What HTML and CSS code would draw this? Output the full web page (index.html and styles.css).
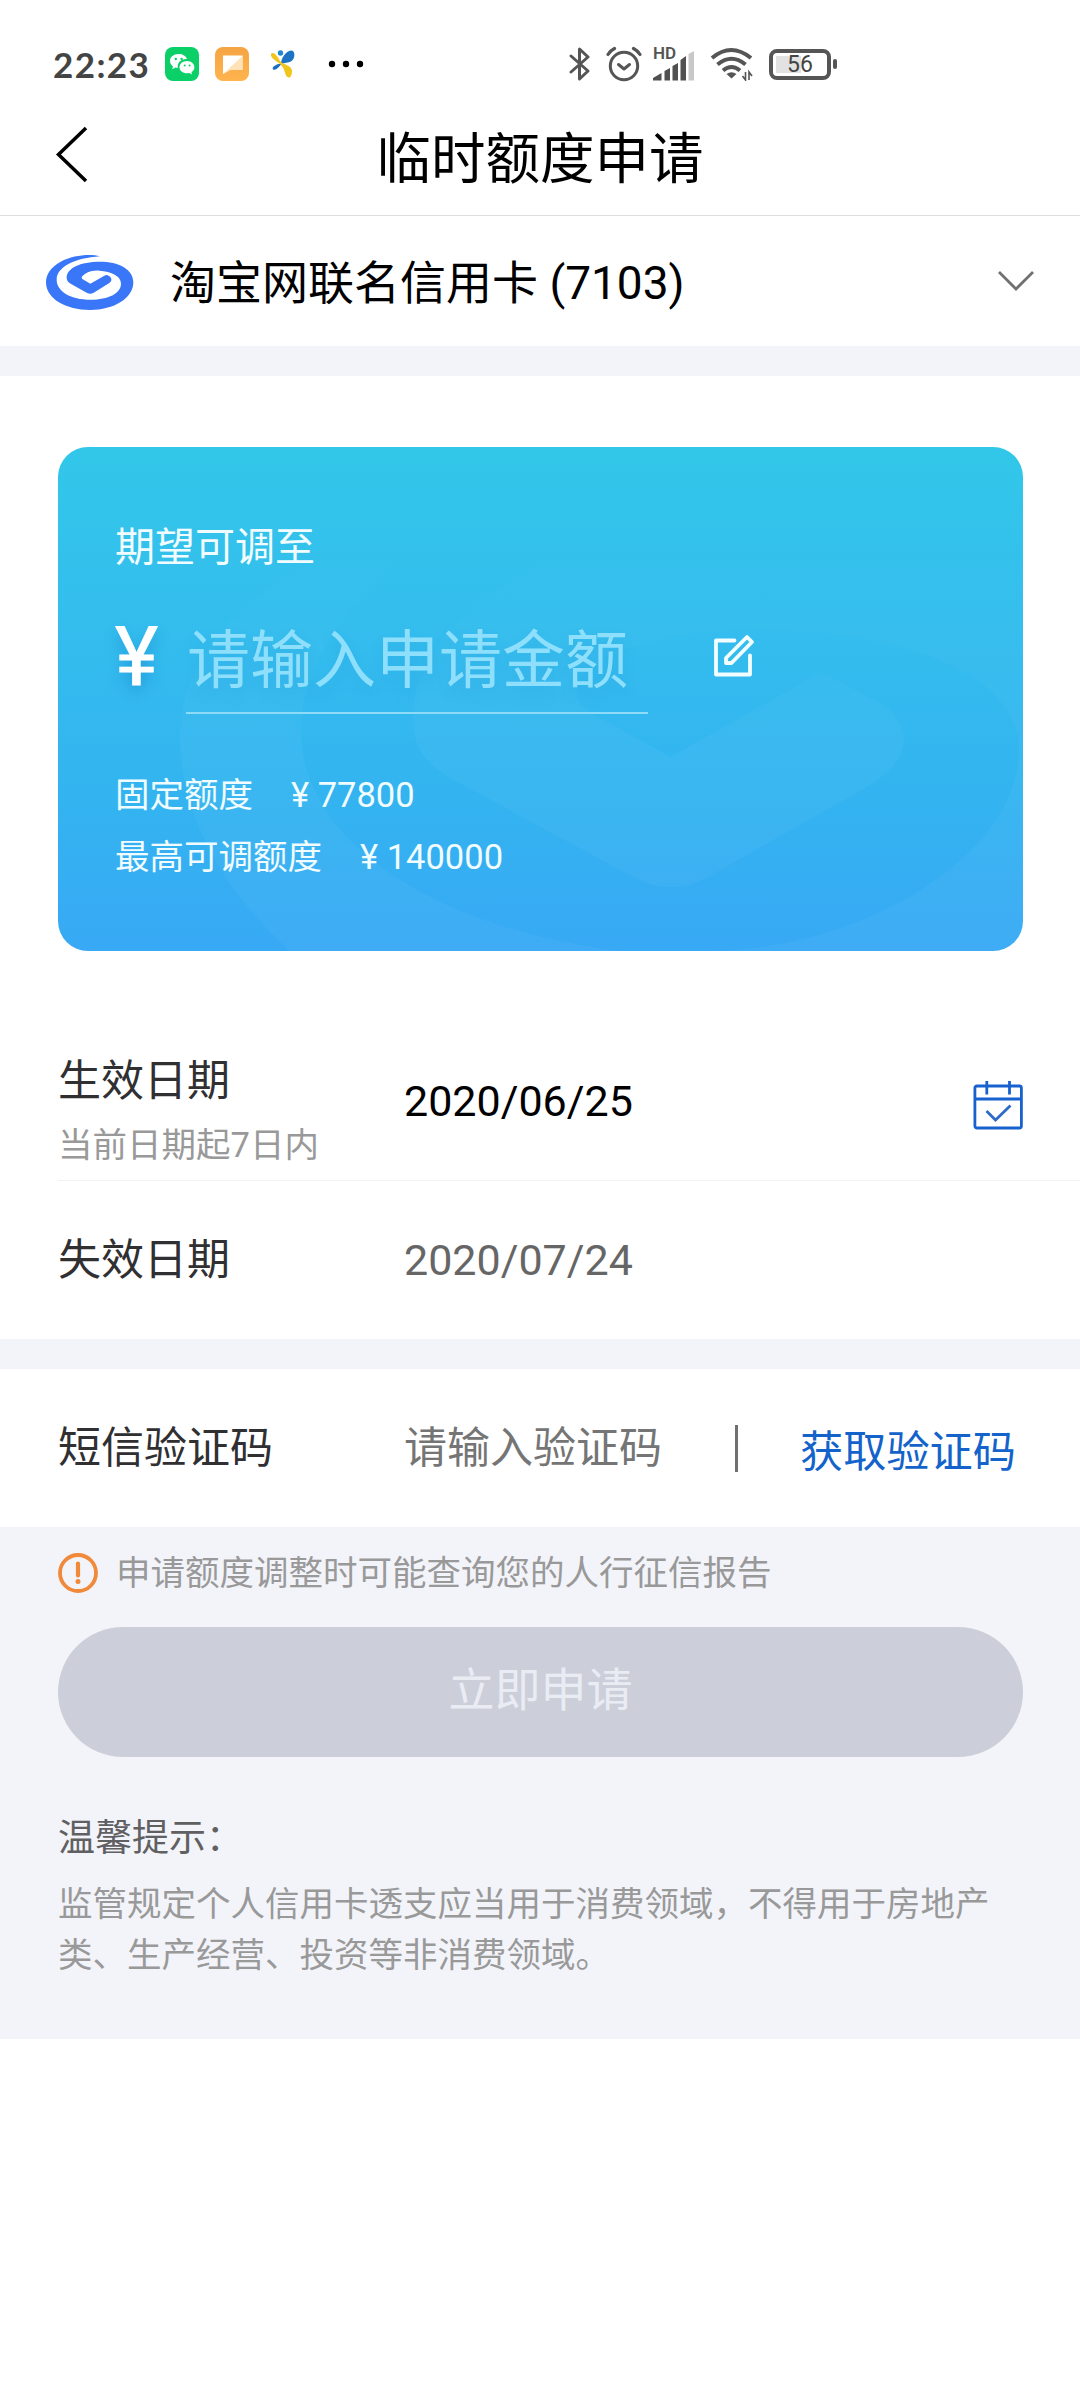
FILE: index.html
```html
<!DOCTYPE html>
<html lang="zh-CN">
<head>
<meta charset="utf-8">
<title>临时额度申请</title>
<link rel="stylesheet" href="styles.css">
</head>
<body>
<div class="status">
  <span class="clock">22:23</span>
  <svg class="app app-chat" width="34" height="34" viewBox="0 0 34 34"><rect width="34" height="34" rx="8" fill="#0bd068"/><path d="M13.5 7C8.500 7 5 10.200 5 14c0 2.200 1 4 3 5.400l-.8 2.800 3.200-1.700 2.400.5c-.8-6 4-9.600 9.200-9C21 9 17.700 7 13.500 7z" fill="#fff"/><path d="M22 14c-4.200 0-7.500 2.800-7.500 6.200S17.800 26.300 22 26.300l2.300-.3 2.800 1.500-.7-2.400c1.900-1.200 3-2.900 3-4.900C29.400 16.800 26.200 14 22 14z" fill="#fff"/><g fill="#0bd068"><circle cx="10.800" cy="12" r="1.200"/><circle cx="16.600" cy="12" r="1.200"/><circle cx="19.700" cy="18.500" r="1"/><circle cx="24.600" cy="18.500" r="1"/></g></svg>
  <svg class="app app-note" width="34" height="34" viewBox="0 0 34 34"><defs><linearGradient id="note" x1="0" y1="0" x2="0" y2="1"><stop offset="0" stop-color="#f5a443"/><stop offset="1" stop-color="#ffb44e"/></linearGradient></defs><rect width="34" height="34" rx="8" fill="url(#note)"/><path d="M8 8.500h19.500v14.500H15L8 27z" fill="#fff"/><path d="M27.500 9v14H15L8 27z" fill="#ffe2b8"/></svg>
  <svg class="app-fly" width="24" height="28" viewBox="0 0 24 28"><circle cx="9.500" cy="3" r="2.700" fill="#2088d0"/><path d="M10 14C10 8 15 1 20 .5c5 0 4 9 0 11-3 1.500-6 1-10 2.500z" fill="#1c73c4"/><path d="M11 13.500C8 16 6 21 2 19.500c-2-3 5-6 9-6z" fill="#1b6fc0"/><path d="M0 4c2-3 6 1 9 7 3 4 12 4 12 10 0 4-1.500 7-3.500 6.500C13 26 15 19 9 14 6 11.500-1 8 0 4z" fill="#f0c51c"/></svg>
  <svg class="dots" width="36" height="8" viewBox="0 0 36 8"><circle cx="4" cy="4" r="3.200"/><circle cx="18" cy="4" r="3.200"/><circle cx="32" cy="4" r="3.200"/></svg>
  <svg class="sys bt" width="22" height="36" viewBox="0 0 22 36"><path d="M2 10l17 15-8.500 8V3l8.500 8L2 26" fill="none" stroke="#555" stroke-width="3" stroke-linejoin="round" stroke-linecap="round"/></svg>
  <svg class="sys alarm" width="36" height="36" viewBox="0 0 36 36"><g fill="none" stroke="#555" stroke-width="3" stroke-linecap="round" stroke-linejoin="round"><circle cx="18" cy="20" r="13.700"/><path d="M12.500 18.500l5.500 4.500 5.500-4.500"/><path d="M2 8.500q2.500-4 6.500-6M34 8.500q-2.500-4-6.500-6" stroke-width="3.200"/></g></svg>
  <div class="signal"><span class="hd">HD</span>
    <svg width="42" height="30" viewBox="0 0 42 30"><path d="M0 29.500v-2.500l8.500-5v7.500zM11.500 20l5.500-3v12.500h-5.500zM19.500 15l5.500-3v17.500h-5.500zM27.500 9l5.500-4v24.500h-5.500z" fill="#505050"/><path d="M35.500 3l5.500-3v29.500h-5.500z" fill="#c8c8c8"/></svg>
  </div>
  <svg class="sys wifi" width="44" height="34" viewBox="0 0 44 34"><g fill="none" stroke="#555" stroke-width="4"><path d="M2 11q19-16 39 0"/><path d="M7.500 17.500q14-11.500 28 0"/><path d="M13 23.500q8.500-7 17 0"/></g><path d="M16.500 27q5-3.500 10 0l-5 4.500z" fill="#555"/><path d="M35.500 25v8l-3-4M39 33v-8l3 4" fill="none" stroke="#555" stroke-width="1.600"/></svg>
  <div class="battery"><span>56</span></div>
  <i class="battery-tip"></i>
</div>

<header class="header">
  <svg class="back" width="34" height="62" viewBox="0 0 34 62"><path d="M31 4L3.500 30.500 31 57" fill="none" stroke="#000" stroke-width="3.500"/></svg>
  <h1>临时额度申请</h1>
</header>

<section class="account">
  <svg class="logo" width="100" height="75" viewBox="0 0 300 225"><path fill="#3a76f8" d="M180 34C150 26 100 30 62 50C30 68 18 90 18 112C18 162 78 195 150 195C222 195 280 160 280 112C280 72 235 50 180 50C120 50 80 70 80 98C80 106 84 111 92 116L140 143C147 147 154 147 161 143L208 114C217 107 216 98 206 92Q200 88 193 92L151 116L127 102C122 96 128 91 136 86C147 79 162 76 178 77C215 79 243 93 243 116C243 145 205 164 152 164C92 164 50 139 50 104C50 66 105 39 180 34Z"/></svg>
  <span class="account-name">淘宝网联名信用卡 (7103)</span>
  <svg class="chevron" width="38" height="24" viewBox="0 0 38 24"><path d="M2 3l17 17L36 3" fill="none" stroke="#707070" stroke-width="2.800"/></svg>
</section>

<section class="quota-wrap">
  <div class="quota">
    <svg class="mark" width="965" height="504" viewBox="0 0 965 504"><defs><linearGradient id="fade" gradientUnits="userSpaceOnUse" x1="0" y1="60" x2="0" y2="504"><stop offset=".1" stop-color="#fff" stop-opacity="0"/><stop offset=".55" stop-color="#fff" stop-opacity=".035"/></linearGradient></defs><path fill="url(#fade)" fill-rule="evenodd" d="M232 504C150 430 122 350 122 290C122 190 220 110 380 60H965V504ZM560 504C370 480 243 390 243 285C243 215 290 150 400 60L620 60C450 110 355 190 355 270C355 300 365 316 400 335L575 430Q613 450 650 430L800 345Q846 320 846 293Q846 270 820 255L763 225L613 310L531 265C490 235 550 183 700 183C840 183 961 225 961 303C961 410 800 504 650 504Z"/></svg>
    <div class="quota-label">期望可调至</div>
    <div class="amount">
      <span class="yen">¥</span>
      <div class="amount-field">请输入申请金额</div>
      <svg class="edit" width="44" height="44" viewBox="0 0 44 44"><g fill="none" stroke="#f2fdff" stroke-width="3.800" stroke-linejoin="round"><path d="M22.500 6.500H4V40.500H38V21.500" stroke-linecap="round"/><path d="M14 24L35 3L40 8L19.500 29H14Z"/></g></svg>
    </div>
    <div class="limits">
      <div class="limit"><span>固定额度</span><span>¥ 77800</span></div>
      <div class="limit"><span>最高可调额度</span><span>¥ 140000</span></div>
    </div>
  </div>
</section>

<section class="dates">
  <div class="row row-start">
    <div class="names"><div class="name">生效日期</div><div class="hint">当前日期起7日内</div></div>
    <span class="value">2020/06/25</span>
    <svg class="calendar" width="52" height="52" viewBox="0 0 52 52"><g fill="none" stroke="#1762cf" stroke-width="2.800"><rect x="2.900" y="7" width="46.500" height="42" rx="2"/><path d="M3 20H49M14.800 2V15.500M37.500 2V15.500"/><path d="M14.500 32L23.500 41L38.500 26.500" stroke="#2e6bc8"/></g></svg>
  </div>
  <div class="row row-end">
    <div class="name">失效日期</div>
    <span class="value muted">2020/07/24</span>
  </div>
</section>

<section class="sms">
  <div class="name">短信验证码</div>
  <div class="code">请输入验证码</div>
  <i class="bar"></i>
  <a class="get">获取验证码</a>
</section>

<section class="foot">
  <div class="notice">
    <svg width="40" height="40" viewBox="0 0 40 40"><circle cx="20" cy="20" r="18" fill="none" stroke="#f0893a" stroke-width="3.800"/><path d="M20 10.500V22.500" stroke="#f0893a" stroke-width="4.200" stroke-linecap="round"/><circle cx="20" cy="28.500" r="2.500" fill="#f0893a"/></svg>
    <span>申请额度调整时可能查询您的人行征信报告</span>
  </div>
  <div class="submit">立即申请</div>
  <div class="tip-title">温馨提示：</div>
  <p class="tip">监管规定个人信用卡透支应当用于消费领域，不得用于房地产类、生产经营、投资等非消费领域。</p>
</section>
</body>
</html>
```
FILE: styles.css
```css
* { box-sizing: border-box; }
body { margin: 0; width: 1080px; min-height: 2400px; background: #fff; color: #000; font-family: Roboto, "Noto Sans CJK SC", sans-serif; }
svg { display: block; flex: none; }

.status { display: flex; align-items: center; height: 102px; padding: 27px 0 0 53px; }
.clock { width: 112px; font: 700 35px/50px Lato, sans-serif; letter-spacing: 1.4px; color: #444; }
.status > * { flex: none; margin-bottom: 1px; }
.app-note { margin-left: 16px; }
.app-fly { margin-left: 22px; }
.dots { margin-left: 33px; }
.bt { margin-left: 205px; }
.alarm { margin-left: 15px; }
.signal { display: flex; flex-direction: column; align-items: flex-start; width: 46px; height: 34px; margin-left: 11px; justify-content: flex-end; }
.hd { height: 4px; font: 600 17px/12px Roboto, sans-serif; color: #555; }
.wifi { margin-left: 11px; }
.battery { display: flex; align-items: center; justify-content: center; width: 62px; height: 31px; margin-left: 15px; border: 4px solid #555; border-radius: 8px; background: linear-gradient(90deg, #e2e2e2 55%, #fff 55%) 3px 3px / 46px 17px no-repeat; font-size: 23px; line-height: 23px; color: #444; }
.battery > span { padding-top: 1px; }
.battery-tip { width: 4px; height: 10px; margin-left: 2px; border-radius: 2px; background: #555; }

.header { display: grid; grid-template-columns: 88px 1fr 88px; align-items: center; height: 114px; border-bottom: 1px solid #dedede; }
.back { margin: -8px 0 0 55px; }
h1 { margin: 0; font-size: 54.5px; font-weight: 400; line-height: 80px; text-align: center; }

.account { display: flex; align-items: center; height: 130px; padding: 0 45px 0 40px; }
.logo { margin-top: 2px; }
.account-name { flex: 1; margin-left: 30px; padding-top: 4px; font-size: 46px; line-height: 60px; }

.quota-wrap { padding: 71px 57px 70px 58px; border-top: 30px solid #f3f4f9; }
.quota { position: relative; height: 504px; padding: 71px 58px 0; border-radius: 30px; overflow: hidden; background: linear-gradient(180deg, #32c7e9, #34bcee 40%, #33b4f0 68%, #38a9f5); color: #f0fcff; }
.mark { position: absolute; left: 0; top: 0; }
.quota > div { position: relative; }
.quota-label { margin-left: -1px; font-size: 40px; line-height: 60px; }
.amount { display: flex; align-items: center; height: 102px; margin-top: 34px; }
.yen { width: 70px; margin-left: -1px; padding-right: 1px; padding-bottom: 12px; font-size: 82px; line-height: 90px; color: #fff; -webkit-text-stroke: .8px #fff; text-shadow: 0 8px 14px rgba(20, 120, 200, .45); }
.amount-field { width: 462px; height: 102px; margin-left: 1px; padding-left: 1px; border-bottom: 2px solid #8edbf8; font-size: 63px; line-height: 98px; color: #8edffb; text-shadow: 0 8px 14px rgba(20, 120, 200, .15); white-space: nowrap; }
.edit { margin: -15px 0 0 64px; }
.limits { margin-top: 50px; margin-left: -1px; font-size: 34.5px; line-height: 62px; }
.limit { display: flex; gap: 38px; }

.dates { padding-left: 58px; }
.row { display: flex; align-items: center; }
.row-start { height: 160px; border-bottom: 1px solid #f2f2f5; }
.names, .row > .name, .sms > .name { width: 345px; }
.names { align-self: flex-start; padding-top: 28px; }
.name { font-size: 43px; line-height: 64px; color: #303033; }
.hint { font-size: 34.5px; line-height: 64px; color: #999; }
.value { width: 231px; padding-left: 1px; font-size: 43px; line-height: 60px; }
.muted { color: #666; }
.calendar { margin: 9px 0 0 338px; }
.row-end { height: 158px; padding-bottom: 1px; }

.sms { display: flex; align-items: center; height: 188px; padding-left: 58px; padding-bottom: 1px; border-top: 30px solid #f3f4f9; font-size: 43px; line-height: 64px; }
.code { width: 332px; padding-left: 1px; color: #757575; }
.bar { width: 3px; height: 47px; margin-top: 2px; background: #707070; }
.get { padding: 10px 0 0 62px; font-size: 43.200px; color: #1463cb; }

.foot { height: 512px; padding: 22px 57px 0 58px; background: #f3f4f9; }
.notice { display: flex; align-items: center; gap: 18px; height: 48px; font-size: 34.5px; line-height: 46px; color: #999; }
.submit { height: 130px; margin-top: 30px; border-radius: 65px; background: #cccfda; color: #eaecf4; font-size: 46px; line-height: 126px; text-align: center; }
.tip-title { margin-top: 57px; font-size: 37px; line-height: 50px; color: #606063; }
.tip { margin: 15px 0 0; font-size: 34.5px; line-height: 51px; color: #999; }
```
